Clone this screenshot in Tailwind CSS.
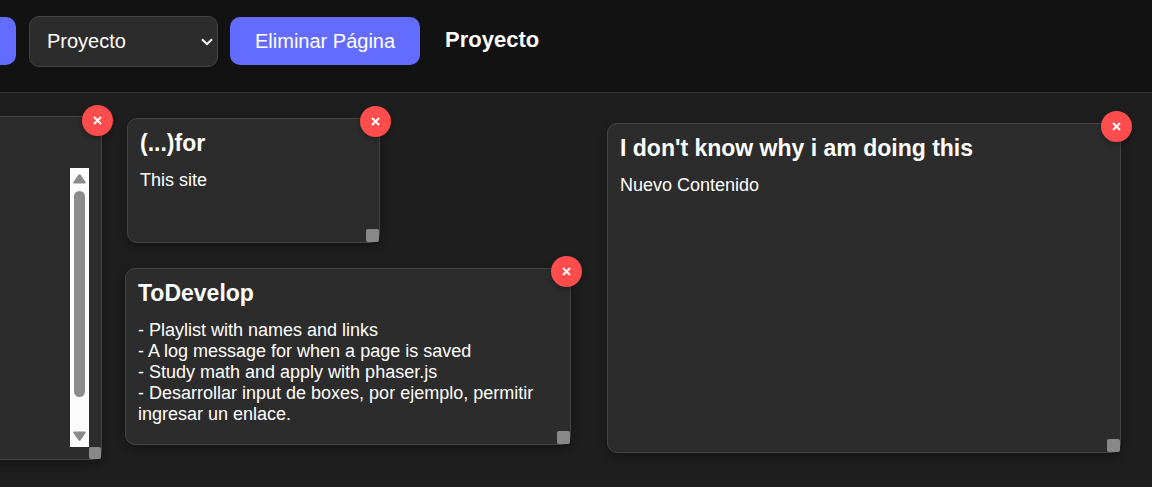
<!DOCTYPE html>
<html lang="es">
<head>
  <meta charset="UTF-8">
  <meta name="viewport" content="width=device-width, initial-scale=1.0">
  <title>Proyecto</title>
  <script src="https://cdn.jsdelivr.net/npm/@tailwindcss/browser@4"></script>
</head>
<body class="flex h-screen flex-col overflow-hidden bg-[#1e1e1e] font-['Liberation_Sans',Arial,sans-serif] text-white">
  <header class="flex items-start border-b border-[#333] bg-[#121212] pt-4 pb-[25px]">
    <button type="button" aria-label="Nueva Página" class="mt-px h-12 w-4 rounded-r-[10px] bg-[#646cff]"></button>
    <div class="relative ml-[13px]">
      <select aria-label="Página" class="h-[51px] w-[189px] appearance-none rounded-[10px] border border-[#444] bg-[#2c2c2c] px-[17px] pb-[2px] text-[20px]">
        <option>Proyecto</option>
      </select>
      <svg class="pointer-events-none absolute top-[22px] right-[5px] h-2 w-3" viewBox="0 0 12 8" fill="none" stroke="#fff" stroke-width="2"><path d="M1 1.2 6 6.2 11 1.2"/></svg>
    </div>
    <button type="button" class="mt-px ml-3 h-12 rounded-[10px] bg-[#646cff] px-[25px] text-[20px]">Eliminar Página</button>
    <h1 class="ml-[25px] text-[22px] leading-[48px] font-bold">Proyecto</h1>
  </header>

  <!-- free canvas: boxes are placed where the user dropped them -->
  <main class="relative flex-1">
    <section class="absolute top-[23px] left-[-200px] h-[344px] w-[302px] rounded-[10px] border border-[#444] bg-[#2c2c2c] shadow-[0_4px_8px_rgba(0,0,0,0.3)]">
      <div class="flex h-full justify-end pt-[51px] pr-3 pb-3">
        <div class="flex w-[19px] flex-col items-center bg-[#fcfcfc] py-[6px]">
          <svg class="h-[10px] w-[13px] shrink-0" viewBox="0 0 13 10" fill="#8b8b8b"><path d="M5.6.6Q6.5-.3 7.4.6L12.6 8Q13.2 9.6 11.8 9.6H1.2Q-.2 9.6.4 8Z"/></svg>
          <div class="mt-[7px] h-[206px] w-[11px] rounded-full bg-[#8b8b8b]"></div>
          <svg class="mt-auto h-[10px] w-[13px] shrink-0" viewBox="0 0 13 10" fill="#8b8b8b"><path d="M5.6 9.4Q6.5 10.3 7.4 9.4L12.6 2Q13.2.4 11.8.4H1.2Q-.2.4.4 2Z"/></svg>
        </div>
      </div>
      <button type="button" aria-label="Eliminar" class="absolute -top-3 -right-3 flex size-[31px] items-center justify-center rounded-full bg-[#ff4d4d] shadow-[0_2px_5px_rgba(0,0,0,0.3)]">
        <svg class="size-[9px]" viewBox="0 0 9 9" stroke="#fff" stroke-width="2"><path d="M1 1 8 8M8 1 1 8"/></svg>
      </button>
      <div class="absolute right-0 bottom-0 size-3 rounded-[2px] bg-[#888]"></div>
    </section>

    <section class="absolute top-[25px] left-[127px] h-[125px] w-[253px] rounded-[10px] border border-[#444] bg-[#2c2c2c] px-3 pt-[11px] shadow-[0_4px_8px_rgba(0,0,0,0.3)]">
      <h2 class="text-[23px] leading-[26px] font-bold">(...)for</h2>
      <p class="mt-[14px] text-[18px] leading-[21px]">This site</p>
      <button type="button" aria-label="Eliminar" class="absolute -top-[13px] -right-3 flex size-[31px] items-center justify-center rounded-full bg-[#ff4d4d] shadow-[0_2px_5px_rgba(0,0,0,0.3)]">
        <svg class="size-[9px]" viewBox="0 0 9 9" stroke="#fff" stroke-width="2"><path d="M1 1 8 8M8 1 1 8"/></svg>
      </button>
      <div class="absolute right-0 bottom-0 size-[13px] rounded-[2px] bg-[#888]"></div>
    </section>

    <section class="absolute top-[175px] left-[125px] h-[177px] w-[446px] rounded-[10px] border border-[#444] bg-[#2c2c2c] px-3 pt-[11px] shadow-[0_4px_8px_rgba(0,0,0,0.3)]">
      <h2 class="text-[23px] leading-[26px] font-bold">ToDevelop</h2>
      <p class="mt-[14px] text-[18px] leading-[21px]">
        - Playlist with names and links<br>
        - A log message for when a page is saved<br>
        - Study math and apply with phaser.js<br>
        - Desarrollar input de boxes, por ejemplo, permitir ingresar un enlace.
      </p>
      <button type="button" aria-label="Eliminar" class="absolute -top-[13px] -right-3 flex size-[31px] items-center justify-center rounded-full bg-[#ff4d4d] shadow-[0_2px_5px_rgba(0,0,0,0.3)]">
        <svg class="size-[9px]" viewBox="0 0 9 9" stroke="#fff" stroke-width="2"><path d="M1 1 8 8M8 1 1 8"/></svg>
      </button>
      <div class="absolute right-0 bottom-0 size-[13px] rounded-[2px] bg-[#888]"></div>
    </section>

    <section class="absolute top-[30px] left-[607px] h-[330px] w-[514px] rounded-[10px] border border-[#444] bg-[#2c2c2c] px-3 pt-[11px] shadow-[0_4px_8px_rgba(0,0,0,0.3)]">
      <h2 class="text-[23px] leading-[26px] font-bold">I don't know why i am doing this</h2>
      <p class="mt-[14px] text-[18px] leading-[21px]">Nuevo Contenido</p>
      <button type="button" aria-label="Eliminar" class="absolute -top-[13px] -right-3 flex size-[31px] items-center justify-center rounded-full bg-[#ff4d4d] shadow-[0_2px_5px_rgba(0,0,0,0.3)]">
        <svg class="size-[9px]" viewBox="0 0 9 9" stroke="#fff" stroke-width="2"><path d="M1 1 8 8M8 1 1 8"/></svg>
      </button>
      <div class="absolute right-0 bottom-0 size-[13px] rounded-[2px] bg-[#888]"></div>
    </section>
  </main>
</body>
</html>
